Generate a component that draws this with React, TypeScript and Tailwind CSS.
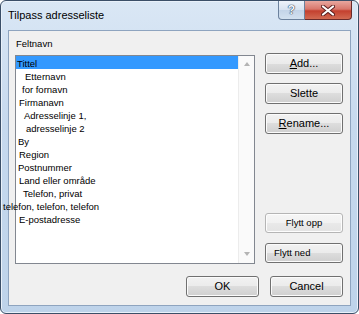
import React from 'react';

const font = { fontFamily: '"Liberation Sans", Arial, sans-serif' };

const btn =
  'flex items-center justify-center rounded-[3px] border border-[#707070] bg-[linear-gradient(to_bottom,#f2f2f2_0%,#ebebeb_50%,#dddddd_50%,#cfcfcf_100%)] shadow-[inset_0_0_0_1px_#fbfbfb] text-black';

const fields: { label: string; pad: string }[] = [
  { label: 'Tittel', pad: 'pl-[1px]' },
  { label: 'Etternavn', pad: 'pl-[9px]' },
  { label: 'for fornavn', pad: 'pl-[6px]' },
  { label: 'Firmanavn', pad: 'pl-[3px]' },
  { label: 'Adresselinje 1,', pad: 'pl-[8px]' },
  { label: 'adresselinje 2', pad: 'pl-[10px]' },
  { label: 'By', pad: 'pl-[2px]' },
  { label: 'Region', pad: 'pl-[3px]' },
  { label: 'Postnummer', pad: 'pl-[2px]' },
  { label: 'Land eller område', pad: 'pl-[3px]' },
  { label: 'Telefon, privat', pad: 'pl-[7px]' },
  { label: 'telefon, telefon, telefon', pad: 'ml-[-13px]' },
  { label: 'E-postadresse', pad: 'pl-[3px]' },
];

function CloseGlyph() {
  return (
    <svg width="14" height="11" viewBox="0 0 14 11">
      <path d="M2 1.5 L12 9.5 M12 1.5 L2 9.5" stroke="#5a1d1d" strokeWidth="4" strokeLinecap="round" />
      <path d="M2 1.5 L12 9.5 M12 1.5 L2 9.5" stroke="#ffffff" strokeWidth="2.2" strokeLinecap="round" />
    </svg>
  );
}

export default function App() {
  return (
    <div className="h-[314px] w-[359px] bg-white" style={font}>
      <div className="flex h-full flex-col rounded-[6px] border border-[#3b4f68] bg-[linear-gradient(to_bottom,#dae7f5_0%,#c6d9ee_40%,#bed3ea_100%)] shadow-[inset_0_0_0_1px_#e9f1fa]">
        {/* title bar */}
        <div className="flex h-[29px] shrink-0 items-start pl-[7px] pr-[6px]">
          <span className="pt-[7px] text-[11px] leading-[14px] text-black">Tilpass adresseliste</span>
          <div className="ml-auto flex">
            <div className="flex h-[19px] w-[27px] items-center justify-center rounded-bl-[4px] border border-t-0 border-[#6b819d] bg-[linear-gradient(to_bottom,#eef3fa_0%,#d6e2f0_50%,#c3d4e8_50%,#d3e1f0_100%)] text-[12px] font-bold leading-none text-[#f4f7fb] [text-shadow:0_0_1px_#33465e,0_0_1px_#33465e,0_0_1px_#33465e]">
              ?
            </div>
            <div className="flex h-[19px] w-[47px] items-center justify-center rounded-br-[4px] border border-l-0 border-t-0 border-[#6a2a2a] bg-[linear-gradient(to_bottom,#e8a79f_0%,#d8776c_45%,#c4402f_55%,#d26a52_100%)]">
              <CloseGlyph />
            </div>
          </div>
        </div>

        {/* client area */}
        <div className="mx-[7px] mb-[7px] flex flex-1 flex-col border border-[#8ea4bf] bg-[#f0f0f0] pl-[6px] pr-[7px]">
          <div className="flex h-[233px] gap-[10px]">
            <div className="flex w-[240px] flex-col">
              <div className="h-[24px] pl-[1px] pt-[6px] text-[9.5px] leading-[13px] text-black">Feltnavn</div>
              <div className="flex h-[209px] border border-[#828790] bg-white">
                <ul className="w-[222px] text-[9.5px] leading-[13px] text-black">
                  {fields.map((f, i) => (
                    <li
                      key={f.label}
                      className={`h-[13px] whitespace-nowrap ${i === 0 ? 'bg-[#3399ff]' : ''}`}
                    >
                      <span className={`block pt-[1px] ${f.pad}`}>{f.label}</span>
                    </li>
                  ))}
                </ul>
                <div className="flex w-[16px] flex-col items-center justify-between border-l border-[#ececec] bg-[#fafafa] pb-[7px] pt-[6px]">
                  <svg width="6" height="4" viewBox="0 0 6 4">
                    <path d="M0 4 L3 0 L6 4 Z" fill="#b4b4b4" />
                  </svg>
                  <svg width="6" height="4" viewBox="0 0 6 4">
                    <path d="M0 0 L3 4 L6 0 Z" fill="#b4b4b4" />
                  </svg>
                </div>
              </div>
            </div>

            <div className="flex w-[78px] flex-col pb-[1px] pt-[22px] text-[11px]">
              <div className="flex flex-col gap-[9px]">
                <button className={`${btn} h-[21px]`}>
                  <span><span className="underline">A</span>dd...</span>
                </button>
                <button className={`${btn} h-[21px]`}>Slette</button>
                <button className={`${btn} h-[21px]`}>
                  <span><span className="underline">R</span>ename...</span>
                </button>
              </div>
              <div className="mt-auto flex flex-col gap-[10px] text-[9.5px]">
                <button className="flex h-[20px] items-center justify-center rounded-[3px] border border-[#b5b5b5] bg-[linear-gradient(to_bottom,#f6f6f6_0%,#f1f1f1_50%,#e9e9e9_50%,#e3e3e3_100%)] text-black shadow-[inset_0_0_0_1px_#fdfdfd]">
                  Flytt opp
                </button>
                <button className={`${btn} h-[20px] justify-start pl-[8px]`}>Flytt ned</button>
              </div>
            </div>
          </div>

          <div className="mt-[12px] flex justify-end gap-[11px] text-[11px]">
            <button className={`${btn} h-[21px] w-[73px] border-[#3c7fb1] shadow-[inset_0_0_0_1px_#d4ecfb]`}>OK</button>
            <button className={`${btn} h-[21px] w-[73px]`}>Cancel</button>
          </div>
        </div>
      </div>
    </div>
  );
}
